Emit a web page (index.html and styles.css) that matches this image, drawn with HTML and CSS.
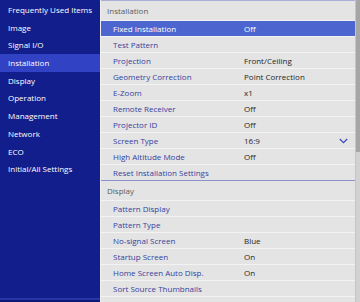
FILE: index.html
```html
<!DOCTYPE html>
<html lang="en">
<head>
  <meta charset="UTF-8">
  <title>Settings - Installation</title>
  <link rel="stylesheet" href="styles.css">
</head>
<body>
  <div class="screen">
    <ul class="side-menu">
      <li>Frequently Used Items</li>
      <li>Image</li>
      <li>Signal I/O</li>
      <li class="active">Installation</li>
      <li>Display</li>
      <li>Operation</li>
      <li>Management</li>
      <li>Network</li>
      <li>ECO</li>
      <li>Initial/All Settings</li>
    </ul>

    <div class="content">
      <div class="list">
        <div class="section">
          <div class="section-title">Installation</div>
          <div class="row selected"><span class="label">Fixed Installation</span><span class="value">Off</span></div>
          <div class="row"><span class="label">Test Pattern</span><span class="value"></span></div>
          <div class="row"><span class="label">Projection</span><span class="value">Front/Ceiling</span></div>
          <div class="row"><span class="label">Geometry Correction</span><span class="value">Point Correction</span></div>
          <div class="row"><span class="label">E-Zoom</span><span class="value">x1</span></div>
          <div class="row"><span class="label">Remote Receiver</span><span class="value">Off</span></div>
          <div class="row"><span class="label">Projector ID</span><span class="value">Off</span></div>
          <div class="row">
            <span class="label">Screen Type</span><span class="value">16:9</span>
            <svg class="chevron" width="9" height="6" viewBox="0 0 9 6"><path d="M0.8 1 L4.5 4.6 L8.2 1" fill="none" stroke="#3d4db8" stroke-width="1.3"/></svg>
          </div>
          <div class="row"><span class="label">High Altitude Mode</span><span class="value">Off</span></div>
          <div class="row"><span class="label">Reset Installation Settings</span><span class="value"></span></div>
        </div>
        <div class="section">
          <div class="section-title">Display</div>
          <div class="row"><span class="label">Pattern Display</span><span class="value"></span></div>
          <div class="row"><span class="label">Pattern Type</span><span class="value"></span></div>
          <div class="row"><span class="label">No-signal Screen</span><span class="value">Blue</span></div>
          <div class="row"><span class="label">Startup Screen</span><span class="value">On</span></div>
          <div class="row"><span class="label">Home Screen Auto Disp.</span><span class="value">On</span></div>
          <div class="row"><span class="label">Sort Source Thumbnails</span><span class="value"></span></div>
          <div class="row"><span class="label">Messages</span><span class="value">On</span></div>
        </div>
      </div>
      <div class="scrollbar"><div class="thumb"></div></div>
    </div>
  </div>
</body>
</html>
```

FILE: styles.css
```css
body {
  margin: 0;
  font-family: 'Open Sans', 'Noto Sans', sans-serif;
  font-size: 8px;
  font-weight: 500;
  background: #0e1878;
}
.screen {
  display: flex;
  width: 360px;
  height: 302px;
  overflow: hidden;
}
.side-menu {
  list-style: none;
  margin: 0;
  padding: 1px 0 0 0;
  width: 100px;
  height: 297px;
  background: #121e8c;
  border-bottom: 2px solid #2636a6;
  flex-shrink: 0;
}
.side-menu li {
  height: 17.7px;
  line-height: 17.7px;
  padding-left: 8px;
  color: #ffffff;
  white-space: nowrap;
}
.side-menu li.active {
  background: #3242c4;
}
.content {
  flex: 1;
  display: flex;
  background: #e4e4e4;
  border-left: 1px solid #f0f0f0;
}
.list {
  flex: 1;
  border-top: 1px solid #a9aed8;
}
.section {
  border-bottom: 1px solid #8b93cf;
}
.section-title {
  height: 19px;
  line-height: 19px;
  padding-left: 6px;
  color: #5a5a5a;
}
.row {
  display: flex;
  align-items: center;
  height: 15px;
  border-top: 1px solid #f3f3f3;
  padding-left: 12px;
  color: #34429e;
}
.row.selected {
  background: #4d66cf;
  color: #ffffff;
}
.row .label {
  width: 131px;
  white-space: nowrap;
}
.row .value {
  flex: 1;
  color: #262626;
  white-space: nowrap;
}
.row.selected .value {
  color: #ffffff;
}
.chevron {
  margin-right: 7px;
}
.scrollbar {
  width: 4px;
  background: #d2d2d2;
  border-left: 1px solid #c4c4c4;
}
.thumb {
  height: 152px;
  background: #a6a6a6;
}
```
